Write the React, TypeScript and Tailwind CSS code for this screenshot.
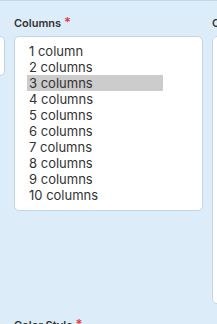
const options = [
  "1 column",
  "2 columns",
  "3 columns",
  "4 columns",
  "5 columns",
  "6 columns",
  "7 columns",
  "8 columns",
  "9 columns",
  "10 columns",
];

function Label({ text }: { text: string }) {
  return (
    <div className="h-4 text-[11px] leading-4 font-semibold text-[#333] whitespace-nowrap">
      {text} <span className="text-[#e03c3c] text-[13px]">*</span>
    </div>
  );
}

export default function App() {
  const selected = "3 columns";

  return (
    <div
      className="w-[217px] h-[324px] overflow-hidden bg-[#dcedf9] border-t border-[#c3d9ea]"
      style={{ fontFamily: "Inter, 'Liberation Sans', sans-serif" }}
    >
      <div className="grid grid-cols-[5px_189px_60px] gap-x-[9px] pt-[13px]">
        {/* left column, mostly cut off */}
        <div className="flex flex-col gap-[6px] overflow-hidden">
          <div className="h-4" />
          <div className="h-[40px] w-[200px] -ml-[195px] bg-white border border-[#c0d6e6] rounded-[5px]" />
        </div>

        <div className="flex flex-col gap-[6px]">
          <Label text="Columns" />
          <div className="h-[175px] bg-white border border-[#c0d6e6] rounded-[5px] pt-[6px] pl-[12px]">
            {options.map((o) => (
              <div
                key={o}
                className={`w-[136px] h-4 leading-4 text-[13px] text-[#333] pl-[2px] ${
                  o === selected ? "bg-[#cccccc]" : ""
                }`}
              >
                {o}
              </div>
            ))}
          </div>
          <div className="mt-[99px]">
            <Label text="Color Style" />
          </div>
        </div>

        <div className="flex flex-col gap-[6px]">
          <Label text="Co" />
          <div className="h-[268px] bg-white border border-[#c0d6e6] rounded-[5px]" />
          <div className="mt-[12px]">
            <Label text="Co" />
          </div>
        </div>
      </div>
    </div>
  );
}
